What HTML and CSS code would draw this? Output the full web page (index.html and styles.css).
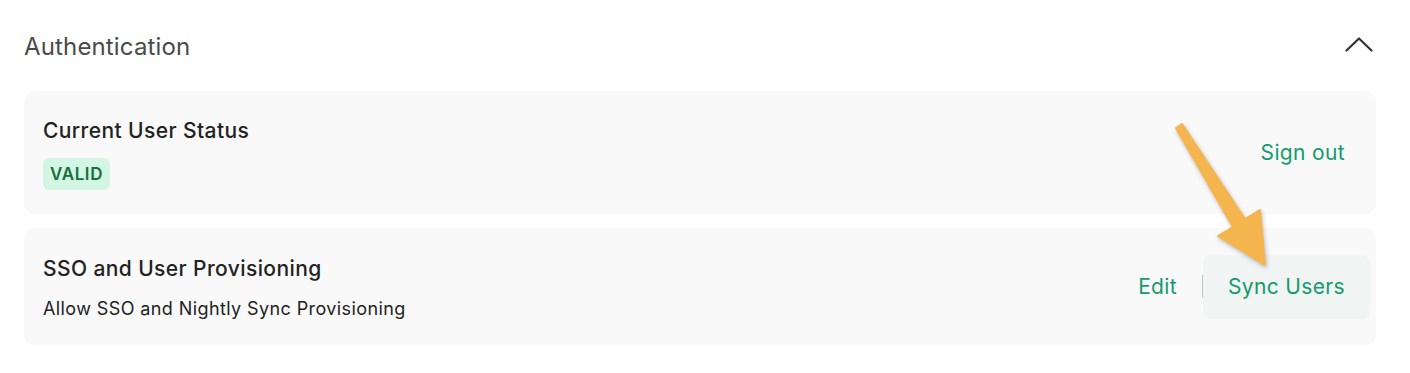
FILE: index.html
```html
<!DOCTYPE html>
<html lang="en">
<head>
  <meta charset="UTF-8" />
  <meta name="viewport" content="width=device-width, initial-scale=1.0" />
  <title>Authentication</title>
  <link rel="stylesheet" href="styles.css">
</head>
<body>
  <div class="section">
    <div class="section-head">
      <h2>Authentication</h2>
      <button class="collapse" aria-label="Collapse">
        <svg width="28" height="16" viewBox="0 0 28 16"><polyline points="1.5,14.5 14,2.5 26.5,14.5" fill="none" stroke="#333" stroke-width="2.2" stroke-linecap="round" stroke-linejoin="round"/></svg>
      </button>
    </div>

    <div class="card card-status">
      <div class="card-info">
        <div class="card-title">Current User Status</div>
        <span class="badge">VALID</span>
      </div>
      <div class="actions">
        <button class="link">Sign out</button>
      </div>
    </div>

    <div class="card card-sso">
      <div class="card-info">
        <div class="card-title">SSO and User Provisioning</div>
        <div class="card-desc">Allow SSO and Nightly Sync Provisioning</div>
      </div>
      <div class="actions">
        <button class="link">Edit</button>
        <span class="divider"></span>
        <button class="link filled">Sync Users</button>
      </div>
    </div>

    <svg class="callout" width="1410" height="373" viewBox="0 0 1410 373">
      <polygon points="1182,124 1245,219 1260,210 1265,265 1218,236 1233,227 1176,128" fill="#f4b54f" stroke="#f4b54f" stroke-width="2" stroke-linejoin="round"/>
    </svg>
  </div>
</body>
</html>
```

FILE: styles.css
```css
body { margin: 0; font-family: Inter, "Noto Sans", sans-serif; background: #fff; color: #222; }
.section { position: relative; padding: 0 34px 28px 24px; }
.section-head { display: flex; align-items: center; justify-content: space-between; height: 91px; }
.section-head h2 { margin: 0; font-size: 24px; font-weight: 400; color: #4a4a4a; letter-spacing: 0.15px; margin-top: 2px; }
.collapse { background: none; border: none; padding: 0; margin-right: 3px; margin-top: -4px; cursor: pointer; display: flex; }
.card { display: flex; align-items: center; justify-content: space-between; background: #f9f9f9; border-radius: 10px; padding: 0 6px 0 19px; box-sizing: border-box; }
.card + .card { margin-top: 14px; }
.card-status { height: 123px; }
.card-sso { height: 117px; }
.card-info { padding-top: 4px; }
.card-title { font-size: 21px; font-weight: 500; color: #222; line-height: 24px; letter-spacing: 0.4px; }
.card-status .card-title { margin-bottom: 12px; }
.card-sso .card-title { margin-bottom: 17px; }
.card-desc { font-size: 18px; color: #222; line-height: 22px; letter-spacing: 0.4px; }
.badge { display: inline-block; background: #d3f6e4; color: #17703c; font-size: 17px; font-weight: 600; padding: 5px 7px; border-radius: 6px; line-height: 22px; letter-spacing: 0.6px; margin-top: 3px; }
.actions { display: flex; align-items: center; }
.link { background: none; border: none; font-family: inherit; font-size: 21px; color: #139b6c; padding: 20px 25px; line-height: 24px; border-radius: 8px; cursor: pointer; letter-spacing: 0.35px; }
.link.filled { background: #f0f4f2; }
.divider { width: 1px; height: 23px; background: #c4c4c4; }
.callout { position: absolute; left: 0; top: 0; pointer-events: none; filter: drop-shadow(1px 2px 2px rgba(0,0,0,0.25)); }
```
